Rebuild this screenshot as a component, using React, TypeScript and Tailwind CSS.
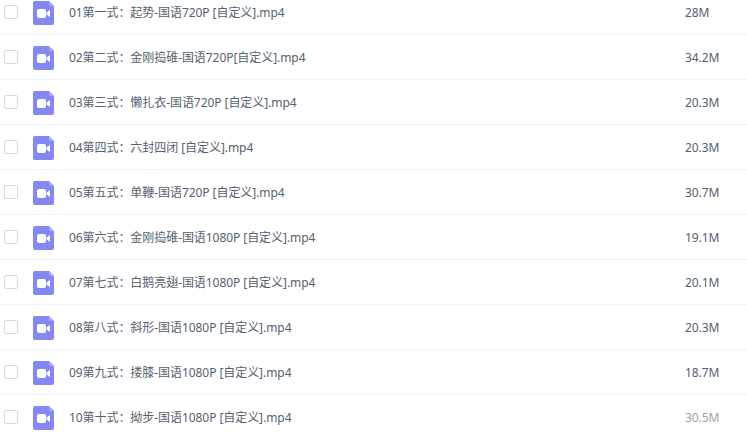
const files = [
  { name: "01第一式：起势-国语720P [自定义].mp4", size: "28M" },
  { name: "02第二式：金刚捣碓-国语720P[自定义].mp4", size: "34.2M" },
  { name: "03第三式：懒扎衣-国语720P [自定义].mp4", size: "20.3M" },
  { name: "04第四式：六封四闭 [自定义].mp4", size: "20.3M" },
  { name: "05第五式：单鞭-国语720P [自定义].mp4", size: "30.7M" },
  { name: "06第六式：金刚捣碓-国语1080P [自定义].mp4", size: "19.1M" },
  { name: "07第七式：白鹅亮翅-国语1080P [自定义].mp4", size: "20.1M" },
  { name: "08第八式：斜形-国语1080P [自定义].mp4", size: "20.3M" },
  { name: "09第九式：搂膝-国语1080P [自定义].mp4", size: "18.7M" },
  { name: "10第十式：拗步-国语1080P [自定义].mp4", size: "30.5M", faded: true },
];

function VideoIcon() {
  return (
    <svg width="21" height="24" viewBox="0 0 21 24" className="mt-0.5 block shrink-0">
      <path d="M2 0H16L21 5V22a2 2 0 0 1-2 2H2a2 2 0 0 1-2-2V2a2 2 0 0 1 2-2Z" fill="#8587f3" />
      <path d="M16 0L21 5H18a2 2 0 0 1-2-2Z" fill="#a9abf8" />
      <rect x="4" y="8" width="9" height="9" rx="2" fill="#fff" />
      <path d="M13.5 11.5L17 9V16L13.5 13.5Z" fill="#fff" />
    </svg>
  );
}

export default function App() {
  return (
    <div className="h-[433px] w-[747px] overflow-hidden bg-white font-['Noto_Sans','Noto_Sans_CJK_SC',sans-serif] text-xs tracking-[-0.06px] text-[#55616f]">
      <ul className="-mt-[10px]">
        {files.map((file) => (
          <li key={file.name} className="flex h-[45px] items-center border-b border-[#f0f4fa] pl-1">
            <span className="h-[14px] w-[14px] shrink-0 rounded-[2px] border border-[#d5dbe5] bg-white" />
            <span className="ml-[15px] mr-[15px]">
              <VideoIcon />
            </span>
            <span className="w-[616px] shrink-0 whitespace-nowrap pt-px">{file.name}</span>
            <span className={file.faded ? "whitespace-nowrap pt-px text-[#9aa3ae]" : "whitespace-nowrap pt-px"}>{file.size}</span>
          </li>
        ))}
      </ul>
    </div>
  );
}
